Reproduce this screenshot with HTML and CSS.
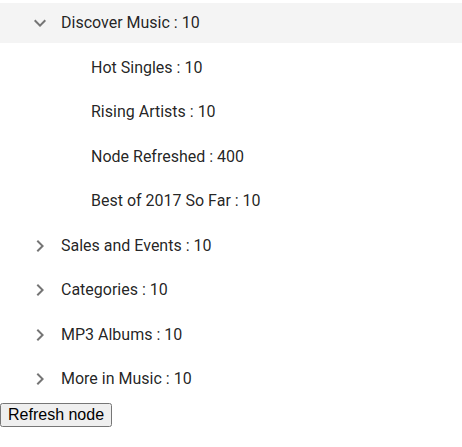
FILE: index.html
```html
<!DOCTYPE html>
<html>
<head>
<meta charset="utf-8">
<link rel="stylesheet" href="styles.css">
</head>
<body>
<div class="tree">
  <div class="node parent active">
    <span class="toggle"><svg width="24" height="24" viewBox="0 0 24 24"><path d="M7.41 8.59 12 13.17l4.59-4.58L18 10l-6 6-6-6z" fill="#757575"/></svg></span>
    <span class="label">Discover Music : 10</span>
  </div>
  <div class="node child"><span class="label">Hot Singles : 10</span></div>
  <div class="node child"><span class="label">Rising Artists : 10</span></div>
  <div class="node child"><span class="label">Node Refreshed : 400</span></div>
  <div class="node child"><span class="label">Best of 2017 So Far : 10</span></div>
  <div class="node parent">
    <span class="toggle"><svg width="24" height="24" viewBox="0 0 24 24"><path d="M8.59 16.59 13.17 12 8.59 7.41 10 6l6 6-6 6z" fill="#757575"/></svg></span>
    <span class="label">Sales and Events : 10</span>
  </div>
  <div class="node parent">
    <span class="toggle"><svg width="24" height="24" viewBox="0 0 24 24"><path d="M8.59 16.59 13.17 12 8.59 7.41 10 6l6 6-6 6z" fill="#757575"/></svg></span>
    <span class="label">Categories : 10</span>
  </div>
  <div class="node parent">
    <span class="toggle"><svg width="24" height="24" viewBox="0 0 24 24"><path d="M8.59 16.59 13.17 12 8.59 7.41 10 6l6 6-6 6z" fill="#757575"/></svg></span>
    <span class="label">MP3 Albums : 10</span>
  </div>
  <div class="node parent">
    <span class="toggle"><svg width="24" height="24" viewBox="0 0 24 24"><path d="M8.59 16.59 13.17 12 8.59 7.41 10 6l6 6-6 6z" fill="#757575"/></svg></span>
    <span class="label">More in Music : 10</span>
  </div>
</div>
<button class="refresh">Refresh node</button>
</body>
</html>
```

FILE: styles.css
```css
html, body {
  margin: 0;
  padding: 0;
  background: #fff;
}
.tree {
  padding-top: 3px;
  font-family: Roboto, "Noto Sans", sans-serif;
  font-size: 16px;
  color: rgba(0,0,0,0.87);
}
.node {
  display: flex;
  align-items: center;
  height: 40px;
  margin-bottom: 4.5px;
}
.node .label {
  position: relative;
  top: -0.5px;
}
.node.active {
  background: #f4f4f4;
}
.toggle {
  width: 24px;
  height: 24px;
  margin-left: 28px;
  margin-right: 9px;
  display: flex;
}
.node.child {
  padding-left: 91px;
}
.refresh {
  display: block;
  margin: 0;
  font-family: "Liberation Sans", Arial, sans-serif;
  font-size: 16px;
  padding: 1px 6px;
  margin-top: -1px;
}
```
